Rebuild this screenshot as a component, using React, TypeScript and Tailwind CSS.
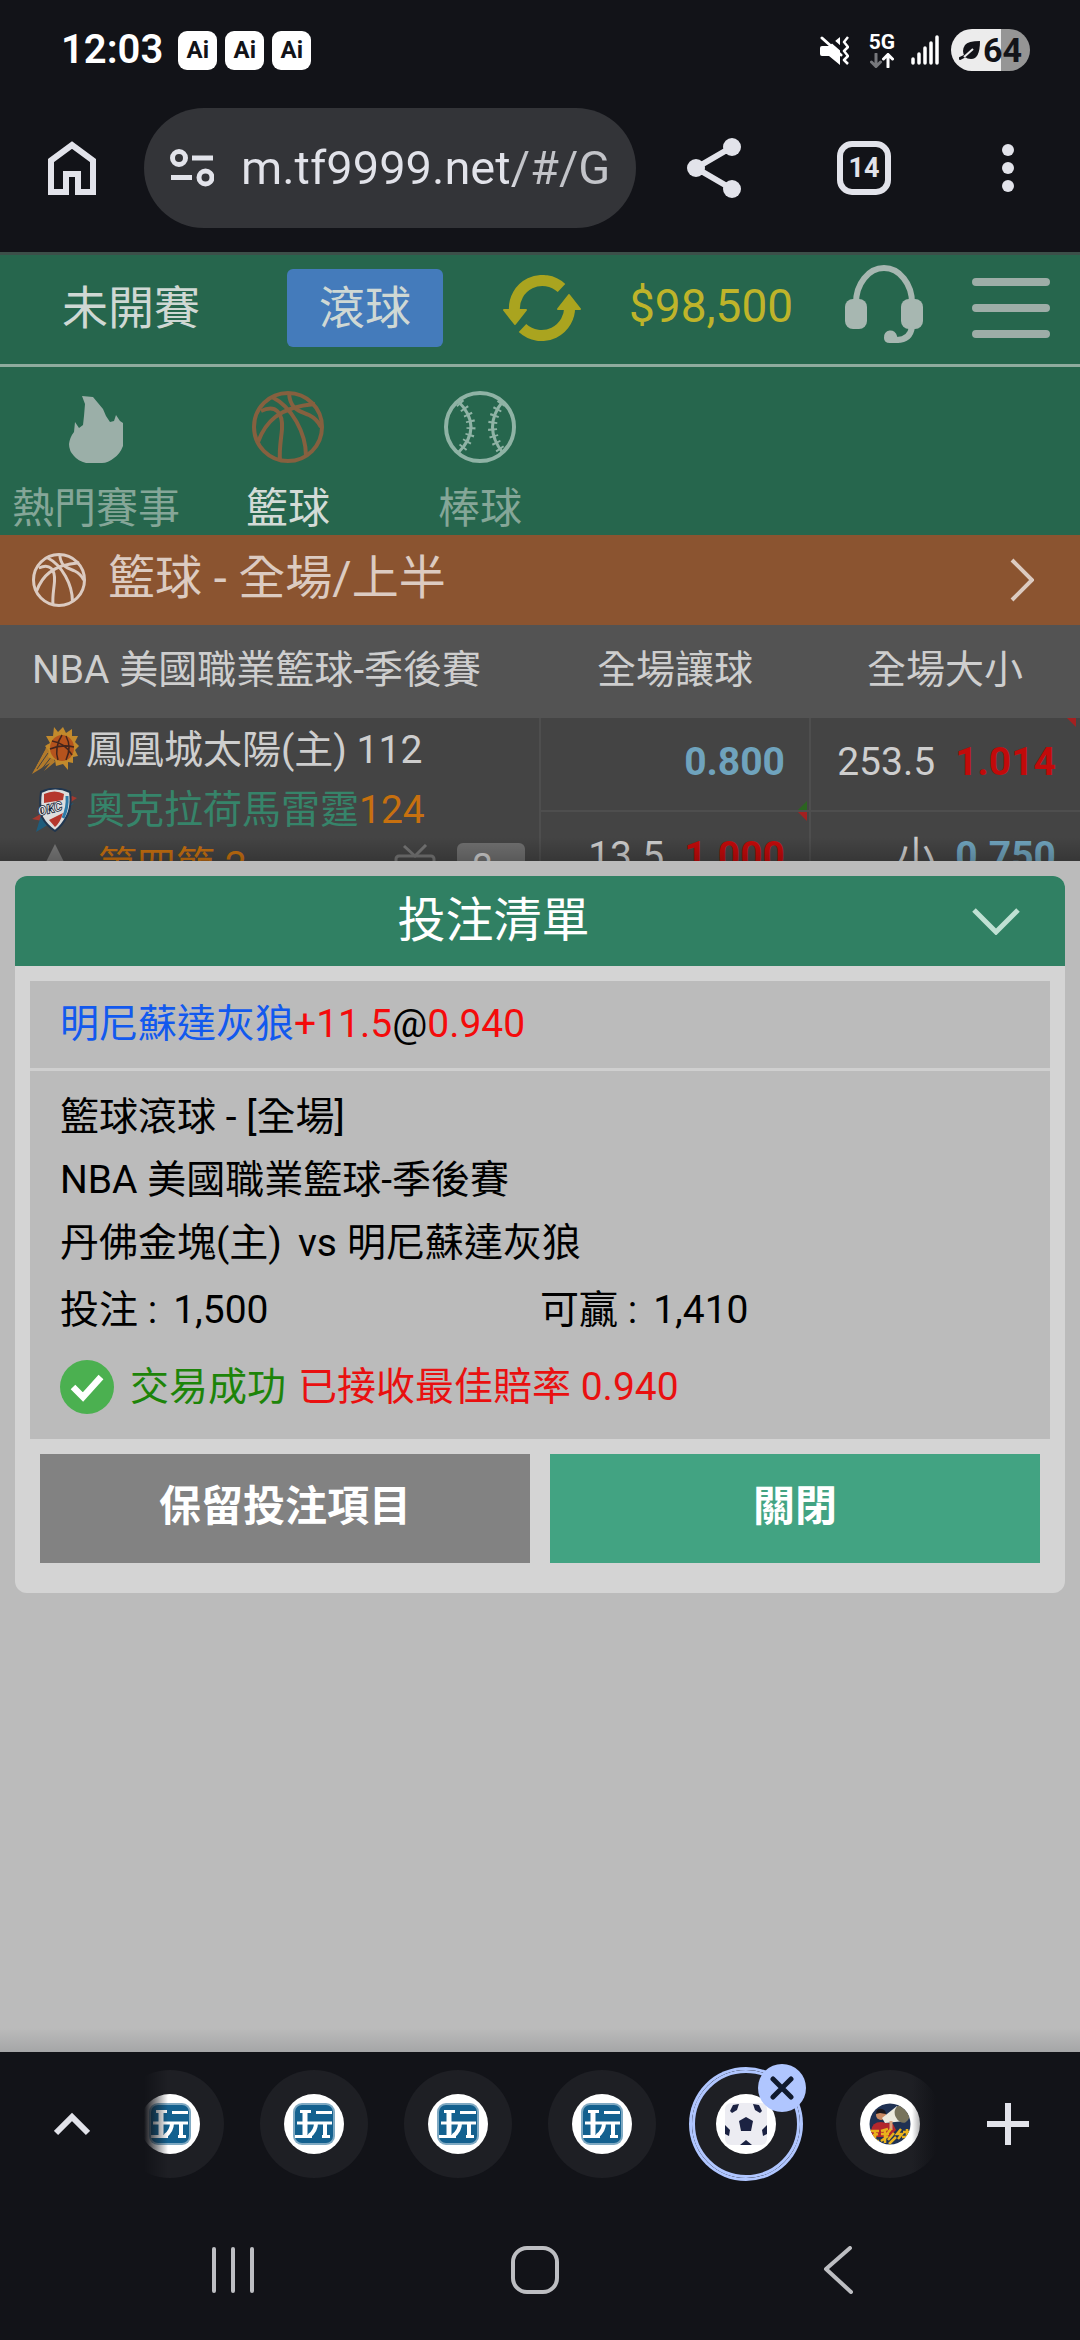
import type { ReactNode } from "react";

function MuteIcon() {
  return (
    <svg viewBox="0 0 29 29" className="h-[29px] w-[29px]">
      <path d="M2 10H9L20 1V29L9 20H2Q0 20 0 18V12Q0 10 2 10Z" fill="#fff" />
      <path d="M3 -3L26 17" stroke="#121318" strokeWidth="4" />
      <path d="M2 2L21 19" stroke="#fff" strokeWidth="3" strokeLinecap="round" />
      <path d="M28 1L24 6L28 11L24 15L28 20L24 24L28 28" stroke="#fff" strokeWidth="2.500" fill="none" strokeLinejoin="round" />
    </svg>
  );
}

function NetworkIcon() {
  return (
    <div className="flex flex-col items-center gap-[2px] text-[21px] leading-[18px] font-bold">
      <span>5G</span>
      <svg viewBox="0 0 24 15" className="h-[15px] w-6 fill-none" strokeWidth="3" strokeLinecap="round">
        <path d="M6 1V13M1.500 9L6 13.500L10.500 9" stroke="#77787c" />
        <path d="M18 14V2M13.500 6L18 1.500L22.500 6" stroke="#fff" />
      </svg>
    </div>
  );
}

function SignalIcon() {
  return (
    <svg viewBox="0 0 28 30" className="h-[30px] w-7" stroke="#fff" strokeWidth="3.500" strokeLinecap="round">
      <path d="M2 24V28M8 19V28M14 13V28M20 8V28M26 2V28" />
    </svg>
  );
}

function HomeIcon() {
  return (
    <svg viewBox="0 0 48 54" className="h-[54px] w-12 fill-none" stroke="#e2e3ea" strokeWidth="6">
      <path d="M3 19.500L24 4L45 19.500V51H30V33H18V51H3Z" />
    </svg>
  );
}

function TuneIcon() {
  return (
    <svg viewBox="0 0 44 38" className="h-[38px] w-11 shrink-0 fill-none" stroke="#e2e3ea" strokeWidth="5">
      <circle cx="9" cy="9" r="6.500" />
      <circle cx="35.500" cy="28.500" r="6.500" />
      <path d="M22 9H43M1 28.500H22" />
    </svg>
  );
}

function ShareIcon() {
  return (
    <svg viewBox="0 0 54 60" className="h-[60px] w-[54px]" fill="#e2e3ea">
      <path d="M45 9L9 30L45 51" stroke="#e2e3ea" strokeWidth="6" fill="none" />
      <circle cx="45" cy="9" r="9" />
      <circle cx="9" cy="30" r="9" />
      <circle cx="45" cy="51" r="9" />
    </svg>
  );
}

function RefreshIcon() {
  return (
    <svg viewBox="0 0 78 66" className="h-[66px] w-[78px]" fill="#aaa41f">
      <path d="M58.500 13A28 28 0 0 0 11.500 36" stroke="#aaa41f" strokeWidth="11" fill="none" />
      <path d="M19.500 53A28 28 0 0 0 66.500 30" stroke="#aaa41f" strokeWidth="11" fill="none" />
      <path d="M1 35H23L12 49Z" stroke="#aaa41f" strokeWidth="2" strokeLinejoin="round" />
      <path d="M55 34H77L66 20Z" stroke="#aaa41f" strokeWidth="2" strokeLinejoin="round" />
    </svg>
  );
}

function HeadsetIcon() {
  return (
    <svg viewBox="0 0 78 78" className="h-[78px] w-[78px]" fill="#a7b7b1">
      <path d="M11 38A28 35 0 0 1 67 38" stroke="#a7b7b1" strokeWidth="6" fill="none" />
      <rect x="0" y="34" width="22" height="30" rx="8" />
      <rect x="56" y="34" width="22" height="30" rx="8" />
      <path d="M67 62Q65 75 52 75H44" stroke="#a7b7b1" strokeWidth="6" fill="none" />
      <path d="M39 73A6.500 6.500 0 0 1 52 71L54 78H45Q39 78 39 73Z" />
    </svg>
  );
}

function MenuIcon() {
  return (
    <svg viewBox="0 0 78 60" className="h-[60px] w-[78px]" stroke="#9dada7" strokeWidth="8" strokeLinecap="round">
      <path d="M4 4H74M4 30H74M4 56H74" />
    </svg>
  );
}

function FlameIcon() {
  return (
    <svg viewBox="0 0 54 67" className="h-[67px] w-[54px]" fill="#9bafa8">
      <path d="M13 0L24 1L29 7L34 13L37 20L41 26L45 25L47 19L51 25L54 27V50Q51 58 45 62Q39 67 33 67H17Q9 65 5 60Q0 55 0 48Q1 41 5 36L6 26L10 32L14 29L15 20L16 8Z" />
    </svg>
  );
}

function BasketballIcon({ className }: { className: string }) {
  return (
    <svg viewBox="0 0 72 72" className={`shrink-0 fill-none ${className}`} stroke="currentColor" strokeWidth="4">
      <circle cx="36" cy="36" r="34" />
      <path d="M6 51C13 32 26 16 63 13" />
      <path d="M9 20C24 13 31 22 30 38C29 50 27 58 28 69" />
      <path d="M20 6C40 16 54 42 54 65" />
      <path d="M37 2C38 19 48 20 57 24Q65 28 69 36" />
    </svg>
  );
}

function BaseballIcon() {
  return (
    <svg viewBox="0 0 72 72" className="h-[72px] w-[72px] fill-none" stroke="#8fb3a5">
      <circle cx="36" cy="36" r="34" strokeWidth="4" />
      <path d="M14 10Q40 36 14 62M59 10Q38 36 59 62" strokeWidth="3" />
      <path d="M14 10Q40 36 14 62M59 10Q38 36 59 62" strokeWidth="9" strokeDasharray="2 5" strokeDashoffset="-2" />
    </svg>
  );
}

function SunsLogo() {
  return (
    <svg viewBox="0 0 47 47" className="h-[47px] w-[47px] shrink-0">
      <path d="M16 17L0 47L18 36L12 44L23 35Z" fill="#b17a2b" />
      <path d="M13 22L2 42M16 26L5 42M20 29L9 43" stroke="#444" strokeWidth="1" />
      <path
        d="M22 0L26 5L31 0L34 6L40 2L40 9L46 9L43 15L47 19L43 23L46 29L41 30L41 36L36 35L36 43L31 37L24 39L23 33L16 30L17 24L13 19L18 16L14 9L21 9Z"
        fill="#c28a2c"
      />
      <ellipse cx="30" cy="21" rx="12" ry="13" fill="#b5531d" />
      <path d="M20 14Q33 16 40 28M30 8Q22 20 26 33M18 22Q30 17 42 20M34 9Q40 20 34 33" stroke="#43251c" strokeWidth="1.500" fill="none" />
    </svg>
  );
}

function ThunderLogo() {
  return (
    <svg viewBox="0 0 47 44" className="h-[44px] w-[47px] shrink-0">
      <path d="M0 31L40 8L45 10L10 33Z" fill="#a3392f" />
      <path d="M4 44L10 24L42 15L14 38Z" fill="#1f5c7b" />
      <path d="M9 4Q23 -3 38 4Q40 18 35 28Q30 38 23 43Q15 38 10 29Q7 17 9 4Z" fill="#ddd" stroke="#20364f" strokeWidth="2" />
      <path d="M12 6Q23 1 32 6L31 12L12 15Z" fill="#b5372d" />
      <path d="M17 32L31 25Q28 35 23 39Z" fill="#b5372d" />
      <path d="M35 8Q36 20 31 30" stroke="#2d7aa8" strokeWidth="3" fill="none" />
      <text x="7" y="28" fontSize="13" fontWeight="900" fontStyle="italic" fill="#f0f0f0" stroke="#1b2c40" strokeWidth="0.800" transform="rotate(-14 7 28)">
        OKC
      </text>
    </svg>
  );
}

function TvIcon() {
  return (
    <svg viewBox="0 0 42 40" className="h-10 w-[42px] fill-none" stroke="#757575" strokeWidth="3">
      <path d="M10 2L21 12L32 1" />
      <rect x="2" y="12" width="38" height="26" rx="3" />
    </svg>
  );
}

function GameFavicon() {
  return (
    <svg viewBox="0 0 42 42" className="h-[42px] w-[42px]">
      <rect width="42" height="42" rx="9" fill="#7fa9c2" />
      <rect x="2" y="2" width="38" height="38" rx="7" fill="#14618f" />
      <g stroke="#fff" fill="none">
        <path d="M12 8V33" strokeWidth="5" />
        <path d="M7 8.500H18M23 9.500H39M4 20H39M2 33.500H19M29 33.500H37" strokeWidth="3" />
        <path d="M23 20Q23 28 16 33M32 20V33" strokeWidth="4" />
      </g>
    </svg>
  );
}

function SoccerFavicon() {
  return (
    <svg viewBox="0 0 42 42" className="h-[42px] w-[42px]">
      <rect width="42" height="42" rx="6" fill="#ececf2" />
      <g fill="#1b2242">
        <path d="M21 14L28 18L26 28H16L14 18Z" />
        <path d="M5 8L8 2L14 1L12 7L7 10Z" />
        <path d="M37 8L34 2L28 1L30 7L35 10Z" />
        <path d="M0 22L5 27L4 33L0 31Z" />
        <path d="M42 22L37 27L38 33L42 31Z" />
        <path d="M21 37L27 42H15Z" />
      </g>
    </svg>
  );
}

function LotteryFavicon() {
  return (
    <svg viewBox="0 0 42 42" className="h-[42px] w-[42px]">
      <clipPath id="lottery">
        <circle cx="21" cy="21" r="20.500" />
      </clipPath>
      <g clipPath="url(#lottery)">
        <rect width="42" height="42" fill="#1f3153" />
        <path d="M2 28Q3 19 12 19L24 21L27 27L20 34H2Z" fill="#b3272d" />
        <circle cx="12" cy="12" r="5" fill="#c98962" />
        <path d="M7 11Q7 5 13 6Q17 7 17 11L11 10Z" fill="#17151b" />
        <path d="M13 15L28 3L36 18L16 20Z" fill="#eceade" />
        <ellipse cx="33" cy="11" rx="7" ry="9" fill="#77735c" transform="rotate(-24 33 11)" />
        <path d="M22 18V27" stroke="#d9a07c" strokeWidth="3" />
        <g stroke="#e9b21c" strokeWidth="2.500" fill="none">
          <path d="M1 28H10M2 33L9 31M6 28V39M2 38H10" />
          <path d="M12 28L19 26M12 31H20M16 28V40M12 38L19 33M22 26L18 31M25 30L19 37M27 34L20 41" />
          <path d="M32 26L28 31H33L29 36M34 29H42M38 26V34M33 34H41M34 38H40" />
        </g>
      </g>
    </svg>
  );
}

const sports = [
  { name: "熱門賽事", icon: <FlameIcon />, color: "text-[#85a698]" },
  { name: "籃球", icon: <BasketballIcon className="h-[72px] w-[72px] text-[#86603f]" />, color: "text-[#d3dbd7]" },
  { name: "棒球", icon: <BaseballIcon />, color: "text-[#85a698]" },
];

function Mark({ className }: { className: string }) {
  return <span className={`absolute h-[9px] w-[9px] ${className}`} />;
}

function Odds({ line, value, color, children }: { line?: string; value: string; color: string; children?: ReactNode }) {
  return (
    <td className="relative h-[93px] border-b-2 border-l-2 border-[#4e4e4e] pr-6 pb-1">
      <div className="flex items-center justify-end gap-5">
        <span>{line}</span>
        <button className={`font-bold ${color}`}>{value}</button>
      </div>
      {children}
    </td>
  );
}

function StatusBar() {
  return (
    <div className="flex h-[84px] items-center justify-between pt-4 pr-[50px] pl-[61px] text-white">
      <div className="flex items-center gap-2">
        <span className="mr-[7px] text-[40px] leading-[42px] font-semibold">12:03</span>
        {[1, 2, 3].map((n) => (
          <span key={n} className="flex h-[39px] w-[39px] items-center justify-center rounded-[9px] bg-white text-[24px] leading-[24px] font-bold text-[#121318]">
            Ai
          </span>
        ))}
      </div>
      <div className="flex items-center">
        <MuteIcon />
        <div className="mr-4 ml-5">
          <NetworkIcon />
        </div>
        <SignalIcon />
        <div className="ml-3 flex h-[42px] w-[79px] items-center justify-center rounded-full bg-linear-to-r from-[#ececec] from-63% to-[#959595] to-63% text-[#121318]">
          <svg viewBox="0 0 22 19" className="h-[19px] w-[22px]">
            <path d="M6 16Q2 10 6 4Q9 0 21 0Q21 18 12 18Q8 18 6 16Z" fill="#121318" />
            <path d="M0 18L6 15" stroke="#121318" strokeWidth="3" />
            <path d="M5 16L14 8" stroke="#ececec" strokeWidth="2" />
          </svg>
          <span className="ml-[2px] text-[34px] leading-[42px] font-bold">64</span>
        </div>
      </div>
    </div>
  );
}

function BrowserBar() {
  return (
    <div className="flex h-[168px] items-center pr-[66px] pl-12">
      <button aria-label="Home">
        <HomeIcon />
      </button>
      <div className="ml-12 flex h-[120px] min-w-0 flex-1 items-center gap-[27px] rounded-full bg-[#333438] pr-5 pl-[26px]">
        <TuneIcon />
        <input
          aria-label="URL"
          defaultValue="m.tf9999.net/#/G"
          className="w-full min-w-0 bg-linear-to-r from-[#e2e3ea] from-72% to-[#c3c4c9] to-74% bg-clip-text text-[47px] leading-[60px] text-transparent outline-none"
        />
      </div>
      <button aria-label="Share" className="ml-[51px]">
        <ShareIcon />
      </button>
      <button aria-label="Tabs" className="ml-24 flex h-[54px] w-[54px] items-center justify-center rounded-[15px] border-6 border-[#e2e3ea] text-[27px] leading-[30px] font-bold text-[#e2e3ea]">
        14
      </button>
      <button aria-label="More" className="ml-[111px] flex flex-col gap-[6px]">
        <span className="h-3 w-3 rounded-full bg-[#e2e3ea]" />
        <span className="h-3 w-3 rounded-full bg-[#e2e3ea]" />
        <span className="h-3 w-3 rounded-full bg-[#e2e3ea]" />
      </button>
    </div>
  );
}

function SiteHeader() {
  return (
    <header className="bg-[#26664d] text-[#cfd8d4]">
      <div className="flex h-[115px] items-center border-t-3 border-b-3 border-t-[#3c4f49] border-b-[#8fab9e] pr-[30px] pb-1 pl-[62px] text-[46px] leading-[60px]">
        <button>未開賽</button>
        <button className="ml-[87px] h-[78px] w-[156px] rounded-md bg-[#447bbb]">滾球</button>
        <button aria-label="Refresh" className="ml-[60px]">
          <RefreshIcon />
        </button>
        <span className="ml-12 pb-1 text-[#bfb42a]">$98,500</span>
        <button aria-label="Support" className="ml-auto pb-2">
          <HeadsetIcon />
        </button>
        <button aria-label="Menu" className="ml-[49px]">
          <MenuIcon />
        </button>
      </div>
      <nav className="flex h-[168px] items-end">
        {sports.map((sport) => (
          <button key={sport.name} className={`flex w-48 flex-col items-center text-[42px] leading-[52px] ${sport.color}`}>
            {sport.icon}
            <span className="mt-5">{sport.name}</span>
          </button>
        ))}
      </nav>
    </header>
  );
}

function MatchTable() {
  return (
    <div className="relative h-[236px] overflow-hidden bg-[#444] text-[39px] leading-[60px] text-[#cecece]">
      <table className="w-full table-fixed">
        <thead className="bg-[#535353]">
          <tr className="h-[93px]">
            <th className="w-1/2 pb-1 pl-8 text-left font-normal">NBA 美國職業籃球-季後賽</th>
            <th className="w-1/4 pb-1 font-normal">全場讓球</th>
            <th className="w-1/4 pb-1 font-normal">全場大小</th>
          </tr>
        </thead>
        <tbody>
          <tr>
            <td rowSpan={2} className="pt-[2px] pr-[14px] pl-8 align-top">
              <div className="flex items-center gap-[7px]">
                <SunsLogo />
                <span>鳳凰城太陽(主) 112</span>
              </div>
              <div className="flex items-center gap-[7px]">
                <ThunderLogo />
                <span className="text-[#36846a]">
                  奧克拉荷馬雷霆<span className="text-[#c7700f]">124</span>
                </span>
              </div>
              <div className="flex items-start">
                <svg viewBox="0 0 24 24" className="mt-1 ml-[11px] h-6 w-6 shrink-0" fill="#777">
                  <path d="M12 0L24 24H0Z" />
                </svg>
                <span className="-mt-1 ml-[31px] flex-1 text-[#c7700f]">第四節 2</span>
                <span className="mt-1">
                  <TvIcon />
                </span>
                <button className="mt-[3px] ml-[21px] h-[48px] w-[68px] rounded-md bg-[#707070] text-[36px] leading-[44px]">2»</button>
              </div>
            </td>
            <Odds value="0.800" color="text-[#6fa3bd]">
              <Mark className="right-[2px] bottom-0 bg-[#2b6420] [clip-path:polygon(100%_0,100%_100%,0_100%)]" />
            </Odds>
            <Odds line="253.5" value="1.014" color="text-[#c20a0a]">
              <Mark className="top-0 right-[4px] bg-[#a32020] [clip-path:polygon(0_0,100%_0,100%_100%)]" />
            </Odds>
          </tr>
          <tr>
            <Odds line="13.5" value="1.000" color="text-[#c20a0a]">
              <Mark className="top-0 right-[2px] bg-[#a32020] [clip-path:polygon(0_0,100%_0,100%_100%)]" />
            </Odds>
            <Odds line="小" value="0.750" color="text-[#6fa3bd]" />
          </tr>
        </tbody>
      </table>
      <div className="absolute inset-x-0 bottom-0 h-6 bg-linear-to-b from-transparent to-black/20" />
    </div>
  );
}

function BetSlip() {
  return (
    <main className="flex-1 bg-[#bbb] px-[15px] pt-[15px]">
      <section className="overflow-hidden rounded-xl bg-[#d4d4d4] text-[39px] leading-[63px] text-black">
        <div className="flex h-[90px] items-center bg-[#308063] text-white">
          <h2 className="flex-1 pb-[2px] text-center text-[48px]">投注清單</h2>
          <button aria-label="收合" className="w-[93px]">
            <svg viewBox="0 0 48 27" className="h-[27px] w-12 fill-none" stroke="#bfe0d3" strokeWidth="5">
              <path d="M2 2L24 24L46 2" />
            </svg>
          </button>
        </div>
        <div className="p-[15px]">
          <div className="bg-[#bbb]">
            <div className="h-[90px] border-b-3 border-[#cfcfcf] px-[30px] pt-3 text-[#1259ee]">
              明尼蘇達灰狼<span className="text-[#f40b0b]">+11.5</span>
              <span className="text-black">@</span>
              <span className="text-[#f40b0b]">0.940</span>
            </div>
            <div className="px-[30px] pt-[15px] pb-[10px]">
              <p>籃球滾球 - [全場]</p>
              <p>NBA 美國職業籃球-季後賽</p>
              <p>
                丹佛金塊(主)<span className="mr-[10px] ml-4">vs</span>明尼蘇達灰狼
              </p>
              <div className="grid grid-cols-2 leading-[70px]">
                <span>
                  投注 :<span className="ml-4">1,500</span>
                </span>
                <span>
                  可贏 :<span className="ml-4">1,410</span>
                </span>
              </div>
              <div className="flex h-[84px] items-center">
                <svg viewBox="0 0 54 54" className="h-[54px] w-[54px]">
                  <circle cx="27" cy="27" r="27" fill="#4bb050" />
                  <path d="M13 27L23 37L41 17" stroke="#fff" strokeWidth="6.500" fill="none" />
                </svg>
                <span className="ml-4 text-[#1d8409]">交易成功</span>
                <span className="ml-3 text-[#e91010]">已接收最佳賠率 0.940</span>
              </div>
            </div>
          </div>
        </div>
        <div className="grid grid-cols-2 gap-5 px-[25px] pb-[30px] text-[42px] font-bold text-white">
          <button className="h-[109px] bg-[#828282] pb-1">保留投注項目</button>
          <button className="h-[109px] bg-[#42a382] pb-1">關閉</button>
        </div>
      </section>
    </main>
  );
}

function Tab({ label, children }: { label: string; children: ReactNode }) {
  return (
    <button aria-label={label} className="flex h-[108px] w-[108px] shrink-0 items-center justify-center rounded-full bg-[#1e1f24]">
      <span className="flex h-[60px] w-[60px] items-center justify-center rounded-full bg-white">{children}</span>
    </button>
  );
}

function TabStrip() {
  return (
    <div className="flex h-36 items-center">
      <button aria-label="Expand" className="flex w-36 justify-center">
        <svg viewBox="0 0 36 24" className="h-6 w-9 fill-none" stroke="#e2e3ea" strokeWidth="6">
          <path d="M2 21L18 5L34 21" />
        </svg>
      </button>
      <div className="relative min-w-0 flex-1 overflow-hidden py-3">
        <div className="-ml-7 flex gap-9">
          {[1, 2, 3, 4].map((n) => (
            <Tab key={n} label={`Tab ${n}`}>
              <GameFavicon />
            </Tab>
          ))}
          <div className="relative rounded-full ring-3 ring-[#b0c6ff]">
            <Tab label="Tab 5">
              <SoccerFavicon />
            </Tab>
            <div className="absolute inset-0 rounded-full border-3 border-[#b0c6ff]" />
            <button aria-label="Close tab" className="absolute -top-[6px] -right-[6px] flex h-12 w-12 items-center justify-center rounded-full bg-[#b0c6ff]">
              <svg viewBox="0 0 24 24" className="h-6 w-6" stroke="#101a2e" strokeWidth="5" strokeLinecap="round">
                <path d="M3 3L21 21M21 3L3 21" />
              </svg>
            </button>
          </div>
          <Tab label="Tab 6">
            <LotteryFavicon />
          </Tab>
        </div>
        <div className="absolute inset-y-0 left-0 w-6 bg-linear-to-r from-[#121318] to-transparent" />
        <div className="absolute inset-y-0 right-0 w-6 bg-linear-to-l from-[#121318] to-transparent" />
      </div>
      <button aria-label="New tab" className="flex w-36 justify-center">
        <svg viewBox="0 0 42 42" className="h-[42px] w-[42px]" stroke="#e2e3ea" strokeWidth="6">
          <path d="M21 0V42M0 21H42" />
        </svg>
      </button>
    </div>
  );
}

function SystemNav() {
  return (
    <div className="flex h-36 items-center pt-1 pr-[91px] pl-[82px] *:flex *:flex-1 *:justify-center">
      <button aria-label="Recents">
        <svg viewBox="0 0 44 48" className="h-12 w-11" stroke="#bdbec2" strokeWidth="4" strokeLinecap="round">
          <path d="M3 3V45M22 3V45M41 3V45" />
        </svg>
      </button>
      <button aria-label="Home screen">
        <svg viewBox="0 0 48 48" className="h-12 w-12 fill-none" stroke="#bdbec2" strokeWidth="4">
          <rect x="2" y="2" width="44" height="44" rx="14" />
        </svg>
      </button>
      <button aria-label="Back">
        <svg viewBox="0 0 30 48" className="h-12 w-[30px] fill-none" stroke="#bdbec2" strokeWidth="4" strokeLinecap="round" strokeLinejoin="round">
          <path d="M27 2L3 23L28 46" />
        </svg>
      </button>
    </div>
  );
}

export default function App() {
  return (
    <div className="flex min-h-screen flex-col bg-[#121318] font-['Roboto','Noto_Sans_CJK_TC',sans-serif]">
      <StatusBar />
      <BrowserBar />
      <SiteHeader />
      <button className="flex h-[90px] shrink-0 items-center bg-[#8b5430] pr-[46px] pl-8 text-[47px] leading-[60px] text-[#dccbc1]">
        <BasketballIcon className="h-[54px] w-[54px]" />
        <span className="ml-[22px] flex-1 pb-1 text-left">籃球 - 全場/上半</span>
        <svg viewBox="0 0 24 44" className="h-11 w-6 fill-none" stroke="currentColor" strokeWidth="4">
          <path d="M2 2L22 22L2 42" />
        </svg>
      </button>
      <MatchTable />
      <BetSlip />
      {/* Shadow cast by the bottom tab strip */}
      <div className="h-6 bg-linear-to-b from-[#bbb] to-[#a5a6a7]" />
      <TabStrip />
      <SystemNav />
    </div>
  );
}
